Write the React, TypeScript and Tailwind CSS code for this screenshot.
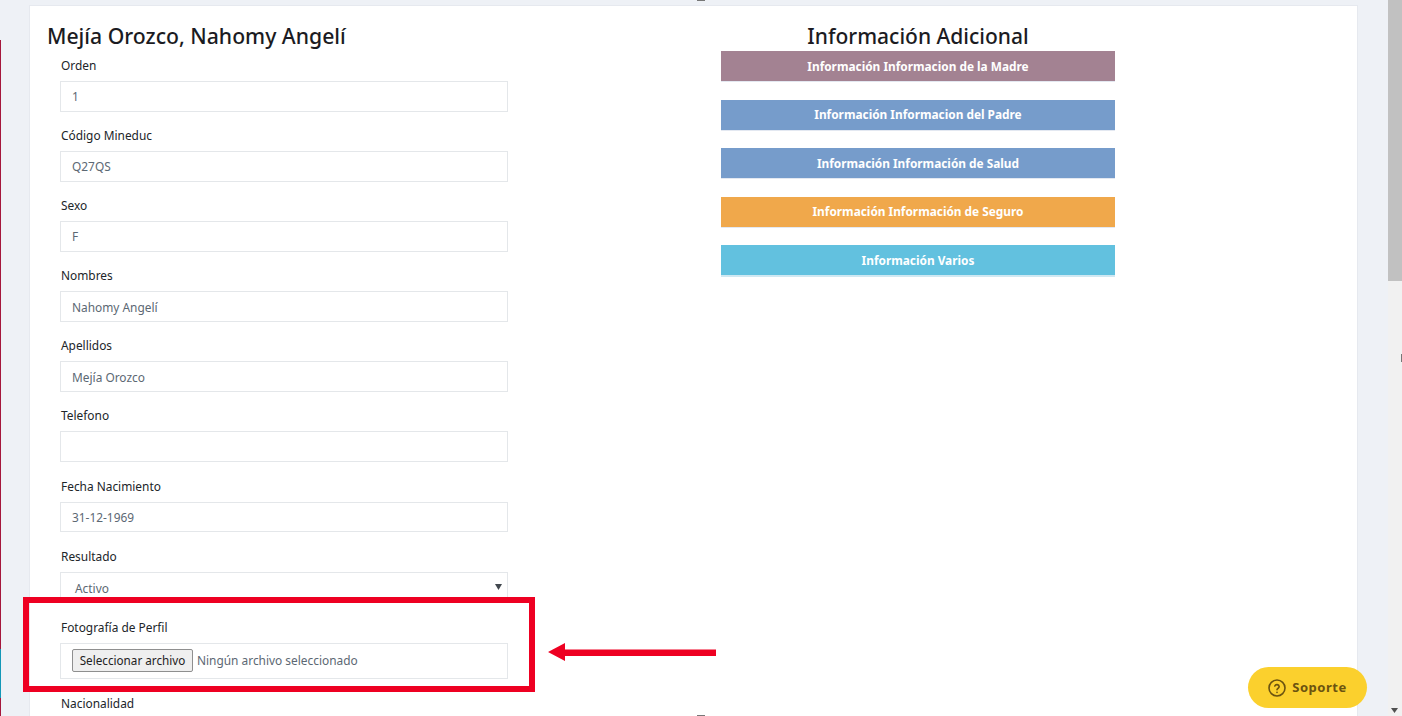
const fields = [
  { label: "Orden", value: "1" },
  { label: "Código Mineduc", value: "Q27QS" },
  { label: "Sexo", value: "F" },
  { label: "Nombres", value: "Nahomy Angelí" },
  { label: "Apellidos", value: "Mejía Orozco" },
  { label: "Telefono", value: "" },
  { label: "Fecha Nacimiento", value: "31-12-1969" },
];

const sections = [
  { label: "Información Informacion de la Madre", color: "bg-[#a38292]" },
  { label: "Información Informacion del Padre", color: "bg-[#769ccb]" },
  { label: "Información Información de Salud", color: "bg-[#769ccb]" },
  { label: "Información Información de Seguro", color: "bg-[#f0a84b]" },
  { label: "Información Varios", color: "bg-[#62c1df]" },
];

export default function App() {
  return (
    <div className="relative flex h-[716px] w-[1402px] items-start overflow-hidden bg-[#eef1f6] font-['Noto_Sans',sans-serif] text-[#212529]">
      {/* strip of the sidebar that shows at the left edge */}
      <div className="flex h-[716px] w-px shrink-0 flex-col pt-[40px]">
        <div className="h-[609px] bg-[#a5173c]" />
        <div className="h-[49px] bg-[#1398b8]" />
        <div className="flex-1 bg-[#a5173c]" />
      </div>

      <main className="ml-[28px] mt-[5px] flex h-[730px] w-[1329px] shrink-0 border border-[#e6e9ef] bg-white">
        <div className="w-[691px] shrink-0 pl-[17px] pt-[15px]">
          <h1 className="h-[34px] text-[21.2px] font-medium leading-[30px] text-[#1b1b22]">Mejía Orozco, Nahomy Angelí</h1>
          <div className="pl-[13px]">
            {fields.map((f) => (
              <div key={f.label} className="mb-[13.6px]">
                <label className="mb-[6px] block pl-px text-[11.9px] leading-[20px]">{f.label}</label>
                <input
                  readOnly
                  value={f.value}
                  className="block h-[30.5px] w-[448px] border border-[#e4e7ea] bg-white px-[11px] text-[11.9px] text-[#5c6873] outline-none"
                />
              </div>
            ))}
            <div className="mb-[14px]">
              <label className="mb-[6px] block pl-px text-[11.9px] leading-[20px]">Resultado</label>
              <div className="flex h-[31px] w-[448px] items-center justify-between border border-[#e4e7ea] bg-white pl-[14px] pr-[5px] text-[11.9px] text-[#5c6873]">
                <span className="pt-[3px]">Activo</span>
                <svg width="7" height="6" viewBox="0 0 7 6" className="text-[#41474e]">
                  <path d="M0 0h7L3.5 6z" fill="currentColor" />
                </svg>
              </div>
            </div>
            <div className="mb-[14px]">
              <label className="mb-[6px] block pl-px text-[11.9px] leading-[20px]">Fotografía de Perfil</label>
              <div className="flex h-[36px] w-[448px] items-center border border-[#e4e7ea] bg-white pl-[11px] text-[11.9px] text-[#5c6873]">
                <button className="h-[23px] w-[121px] rounded-[2px] border border-[#8f8f8f] bg-[#efefef] text-[11.7px] text-[#222]">
                  Seleccionar archivo
                </button>
                <span className="ml-[4px]">Ningún archivo seleccionado</span>
              </div>
            </div>
            <label className="block pl-px text-[11.9px] leading-[20px]">Nacionalidad</label>
          </div>
        </div>

        <div className="w-[394px] shrink-0">
          <h2 className="mt-[15px] h-[30px] text-center text-[21px] font-medium leading-[30px] text-[#1b1b22]">Información Adicional</h2>
          <div className="flex flex-col gap-[17.6px]">
            {sections.map((s) => (
              <div
                key={s.label}
                className={`flex h-[31px] items-center justify-center border-b border-[#e3e8f1] pt-[1px] text-[11.85px] font-bold text-white last:h-[32px] last:border-b-2 last:border-[#cfe8f2] ${s.color}`}
              >
                {s.label}
              </div>
            ))}
          </div>
        </div>
      </main>

      {/* page scrollbar */}
      <div className="absolute bottom-0 right-0 top-0 flex w-[14px] flex-col justify-between bg-[#f1f1f1]">
        <div className="h-[281px] bg-[#c1c1c1]" />
        <svg width="14" height="8" viewBox="0 0 14 8" className="mb-px text-[#505050]">
          <path d="M3 1h7L6.500 6z" fill="currentColor" />
        </svg>
      </div>

      {/* little handles of the screenshot tool */}
      <div className="absolute left-[697px] top-0 h-px w-[8px] bg-[#777]" />
      <div className="absolute left-[697px] top-[715px] h-px w-[8px] bg-[#777]" />
      <div className="absolute left-[1401px] top-[354px] h-[8px] w-px bg-[#777]" />

      {/* annotation drawn over the screenshot */}
      <div className="absolute left-[23px] top-[597px] h-[95px] w-[512px] border-[6px] border-[#ee0022]" />
      <svg className="absolute left-[547px] top-[642px]" width="170" height="20" viewBox="0 0 170 20">
        <path d="M1 10 18 1v6.500h151v6.500H18v5z" fill="#ee0022" />
      </svg>

      <button className="absolute left-[1248px] top-[667px] flex h-[41px] w-[119px] items-center justify-center gap-[6px] rounded-[21px] bg-[#fbd02d] text-[13px] font-bold tracking-[0.5px] text-[#6b5310]">
        <svg width="18" height="18" viewBox="0 0 18 18" fill="none" stroke="currentColor" strokeWidth="1.6" strokeLinecap="round">
          <circle cx="9" cy="9" r="8" />
          <path d="M6.800 7a2.300 2.300 0 0 1 4.400.6c0 1.500-2.200 1.900-2.200 3.200" />
          <path d="M9 13.400h.01" />
        </svg>
        Soporte
      </button>
    </div>
  );
}
